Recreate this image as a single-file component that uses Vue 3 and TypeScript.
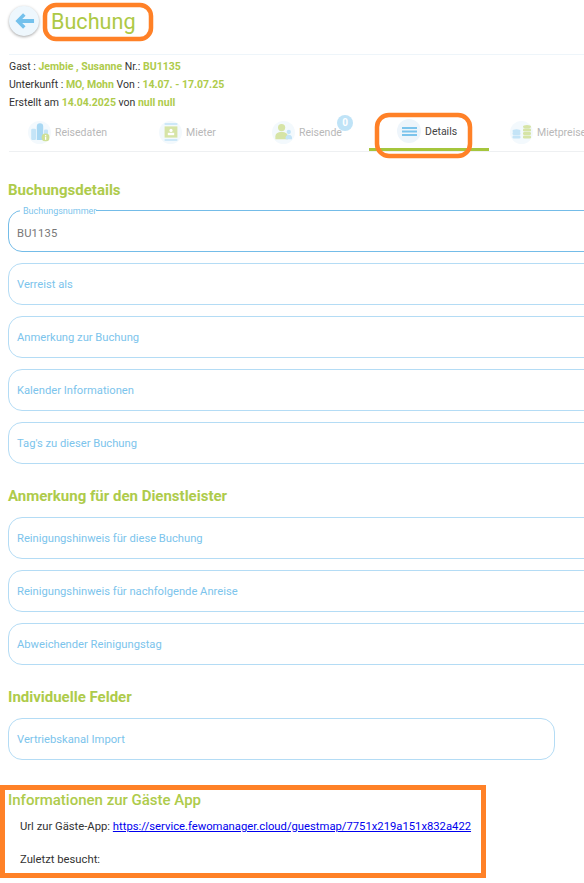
<script setup lang="ts">
interface Tab { key: string; label: string; active?: boolean; badge?: string }
const tabs: Tab[] = [
  { key: 'data', label: 'Reisedaten' },
  { key: 'tenant', label: 'Mieter' },
  { key: 'people', label: 'Reisende', badge: '0' },
  { key: 'details', label: 'Details', active: true },
  { key: 'price', label: 'Mietpreise' },
]
const details = ['Verreist als', 'Anmerkung zur Buchung', 'Kalender Informationen', "Tag's zu dieser Buchung"]
const cleaning = ['Reinigungshinweis für diese Buchung', 'Reinigungshinweis für nachfolgende Anreise', 'Abweichender Reinigungstag']
</script>

<template>
  <div class="page">
    <header class="head">
      <button class="back" aria-label="Zurück">
        <svg width="21" height="18" viewBox="0 0 22 18"><path d="M9.5 1 1.5 9l8 8 2.6-2.600L8.600 11H21V7H8.600l3.500-3.400z" fill="#74c1ec"/></svg>
      </button>
      <h1>Buchung</h1>
    </header>

    <section class="info">
      <p>Gast : <b>Jembie , Susanne</b> Nr.: <b>BU1135</b></p>
      <p>Unterkunft : <b>MO, Mohn</b> Von : <b>14.07. - 17.07.25</b></p>
      <p>Erstellt am <b>14.04.2025</b> von <b>null null</b></p>
    </section>

    <nav class="tabs">
      <div v-for="t in tabs" :key="t.key" class="tab" :class="[t.key, { active: t.active }]">
        <span class="ico">
          <svg v-if="t.key === 'data'" width="24" height="24" viewBox="0 0 24 24">
            <rect x="1" y="8" width="6" height="14" rx="1.500" fill="#c4e4f7"/>
            <path d="M8 5a4 4 0 0 1 8 0v17H8z" fill="#a9d8f3"/>
            <rect x="17" y="9" width="5" height="13" rx="1.500" fill="#c4e4f7"/>
            <circle cx="19" cy="19" r="5" fill="#cfe096"/>
            <rect x="18.200" y="17.800" width="1.600" height="4" fill="#fff"/>
            <rect x="18.200" y="15.800" width="1.600" height="1.400" fill="#fff"/>
          </svg>
          <svg v-else-if="t.key === 'tenant'" width="20" height="24" viewBox="0 0 20 24">
            <rect x="2" y="1" width="16" height="2" fill="#c4e4f7"/>
            <rect x="2" y="21" width="16" height="2" fill="#c4e4f7"/>
            <rect x="2" y="5" width="16" height="14" fill="#d6e4a6"/>
            <circle cx="10" cy="10" r="2" fill="#fff"/>
            <rect x="6" y="13" width="8" height="3" fill="#fff"/>
          </svg>
          <svg v-else-if="t.key === 'people'" width="22" height="22" viewBox="0 0 22 22">
            <circle cx="8" cy="5.500" r="4.500" fill="#d6e4a6"/>
            <path d="M0 20v-3c0-3.500 3-6 8-6s8 2.500 8 6v3z" fill="#d6e4a6"/>
            <circle cx="17" cy="11" r="2.700" fill="#c4e4f7"/>
            <path d="M13 20v-2c0-2 2-3.500 4-3.500s4 1.500 4 3.500v2z" fill="#c4e4f7"/>
          </svg>
          <svg v-else-if="t.key === 'details'" width="15" height="9" viewBox="0 0 15 9">
            <rect width="15" height="2" fill="#7cc4ec"/>
            <rect y="3.500" width="15" height="2" fill="#7cc4ec"/>
            <rect y="7" width="15" height="2" fill="#7cc4ec"/>
          </svg>
          <svg v-else width="20" height="14" viewBox="0 0 20 14" class="coins">
            <ellipse cx="4.500" cy="6" rx="4" ry="1.800" fill="#c4e4f7"/>
            <rect x=".5" y="7" width="8" height="3" rx="1.200" fill="#c4e4f7"/>
            <rect x=".5" y="10.500" width="8" height="3" rx="1.200" fill="#c4e4f7"/>
            <ellipse cx="15" cy="1.800" rx="4" ry="1.800" fill="#d6e4a6"/>
            <rect x="11" y="3.500" width="8" height="3" rx="1.200" fill="#d6e4a6"/>
            <rect x="11" y="7" width="8" height="3" rx="1.200" fill="#d6e4a6"/>
            <rect x="11" y="10.500" width="8" height="3" rx="1.200" fill="#d6e4a6"/>
          </svg>
        </span>
        <span class="label">{{ t.label }}</span>
        <span v-if="t.badge" class="badge">{{ t.badge }}</span>
      </div>
    </nav>

    <main class="content">
      <h2>Buchungsdetails</h2>
      <div class="fields">
        <div class="field filled">
          <span class="legend">Buchungsnummer</span>
          <span>BU1135</span>
        </div>
        <div v-for="f in details" :key="f" class="field">{{ f }}</div>
      </div>

      <h2>Anmerkung für den Dienstleister</h2>
      <div class="fields">
        <div v-for="f in cleaning" :key="f" class="field">{{ f }}</div>
      </div>

      <h2>Individuelle Felder</h2>
      <div class="fields">
        <div class="field short">Vertriebskanal Import</div>
      </div>

      <h2 class="guest">Informationen zur Gäste App</h2>
      <p class="line">Url zur Gäste-App: <a href="#">https://service.fewomanager.cloud/guestmap/7751x219a151x832a422</a></p>
      <p class="line last">Zuletzt besucht:</p>
    </main>

    <svg class="marks" width="584" height="883" viewBox="0 0 584 883" aria-hidden="true">
      <rect x="45" y="5" width="106" height="34" rx="11" />
      <rect x="377" y="115" width="93" height="41" rx="12" />
      <rect x="2.500" y="787.500" width="481" height="88" class="box" />
    </svg>
  </div>
</template>

<style>
html, body { margin: 0; background: #fff; }
</style>

<style scoped>
.page {
  position: relative;
  width: 584px;
  height: 883px;
  overflow: hidden;
  background: #fff;
  font-family: Roboto, "Liberation Sans", sans-serif;
  color: #333;
}
.head {
  display: flex;
  align-items: center;
  gap: 12px;
  height: 55px;
  margin-left: 9px;
  padding-bottom: 13px;
  box-sizing: border-box;
  border-bottom: 1px solid #eef5fa;
}
.back {
  display: flex;
  align-items: center;
  justify-content: center;
  width: 30px;
  height: 30px;
  padding: 0;
  border: 0;
  border-radius: 50%;
  background: #eef7fd;
  box-shadow: 0 1px 3px rgba(0, 0, 0, 0.35);
}
h1 {
  margin: 2px 0 0;
  font-size: 21.600px;
  line-height: 30px;
  font-weight: 400;
  color: #adc945;
}
.info {
  margin: 3px 0 0 9px;
  font-size: 10.500px;
  line-height: 18px;
  color: #333;
}
.info p { margin: 0; }
.info b { color: #aecb4b; font-weight: 700; }
.tabs {
  display: flex;
  height: 38px;
  margin: 2px 0 0 9px;
  border-bottom: 1px solid #eef0f2;
  box-sizing: border-box;
}
.tab {
  position: relative;
  display: flex;
  align-items: center;
  flex: none;
  gap: 4px;
  height: 36px;
  font-size: 10.500px;
  color: #b8b8b8;
}
.tab.data { width: 131px; padding-left: 19px; box-sizing: border-box; }
.tab.tenant { width: 113px; padding-left: 19px; box-sizing: border-box; }
.tab.people { width: 116px; padding-left: 19px; box-sizing: border-box; }
.tab.details {
  width: 120px;
  height: 37px;
  padding-left: 28px;
  box-sizing: border-box;
  color: #444;
  border-bottom: 3px solid #a5c63c;
}
.tab.price { padding-left: 21px; }
.ico {
  display: flex;
  align-items: center;
  justify-content: center;
  width: 23px;
  height: 23px;
  border-radius: 50%;
  background: #f3f9fd;
}
.ico svg { flex: none; transform: scale(0.8); }
.details .ico svg { transform: none; }
.details .ico { width: 24px; height: 24px; background: #eef5fb; }
.coins { transform: none !important; }
.badge {
  position: absolute;
  top: 1px;
  left: 84px;
  width: 16px;
  height: 16px;
  border-radius: 50%;
  background: #bfe3f7;
  color: #fff;
  font-size: 10px;
  font-weight: 700;
  line-height: 16px;
  text-align: center;
}
.content { padding-left: 8px; }
h2 {
  margin: 0;
  font-size: 15px;
  line-height: 20px;
  font-weight: 700;
  color: #aecb4b;
}
.content h2:first-child { margin-top: 28px; }
.content h2:first-child + .fields { margin-top: 10px; }
.fields {
  display: flex;
  flex-direction: column;
  gap: 11px;
  margin: 11px 0 22px;
}
.field {
  position: relative;
  display: flex;
  align-items: center;
  width: 590px;
  height: 42px;
  padding-left: 8px;
  box-sizing: border-box;
  border: 1px solid #b4dcf5;
  border-radius: 14px;
  font-size: 11.200px;
  color: #7cc4ec;
}
.field.filled {
  padding-top: 4px;
  border-color: #74bce8;
  color: #777;
  font-size: 11.200px;
  letter-spacing: 0.2px;
}
.legend {
  position: absolute;
  top: -5px;
  left: 11px;
  padding: 0 0 0 3px;
  background: #fff;
  font-size: 9px;
  line-height: 11px;
  letter-spacing: 0;
  color: #7cc4ec;
}
.field.short { width: 547px; }
h2.guest {
  margin-top: 30px;
  font-weight: 500;
}
.line {
  margin: 8px 0 0 12px;
  font-size: 11.250px;
  line-height: 18px;
  color: #333;
}
.line a { color: #0000ee; text-decoration: underline; }
.line.last { margin-top: 15px; }
.marks {
  position: absolute;
  top: 0;
  left: 0;
  pointer-events: none;
}
.marks rect {
  fill: none;
  stroke: #ff8127;
  stroke-width: 4.500;
}
.marks rect.box { stroke-width: 5; }
</style>
